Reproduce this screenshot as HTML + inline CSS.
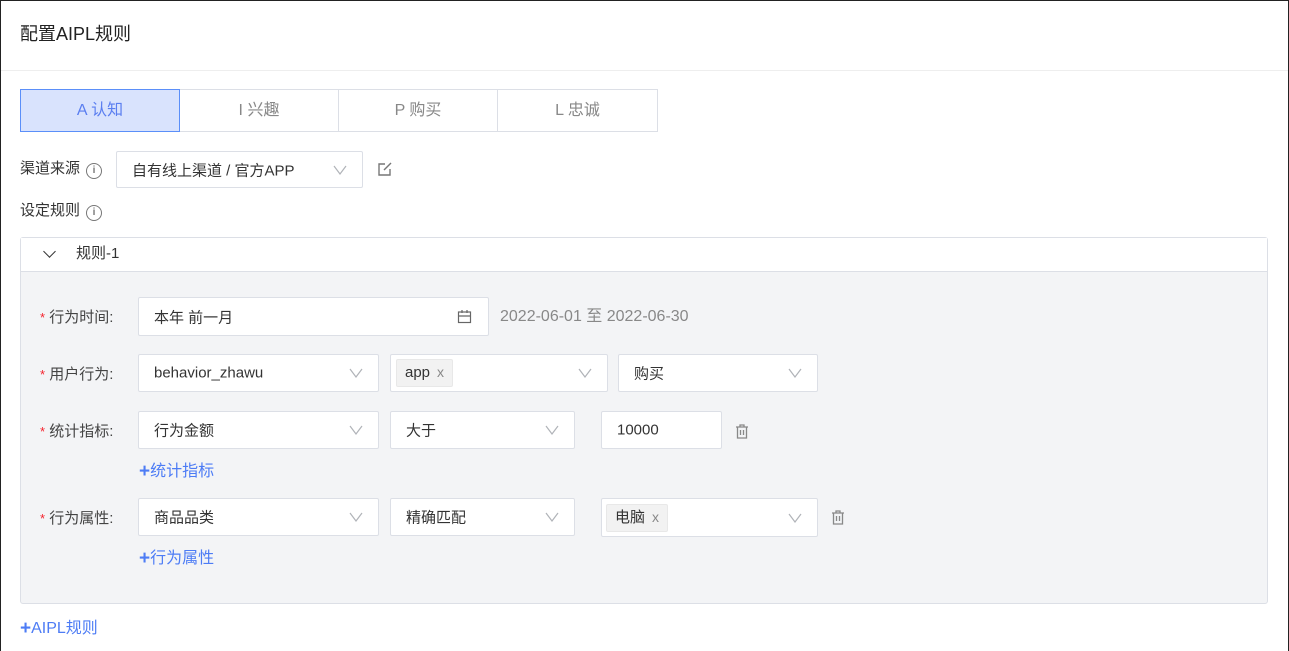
<!DOCTYPE html><html><head><meta charset="utf-8"><style>
*{box-sizing:border-box;margin:0;padding:0}
body{width:1289px;height:651px;overflow:hidden;background:#fff;font-family:"Liberation Sans","Noto Sans CJK SC",sans-serif;font-size:15px;color:#333;position:relative}
.frame{position:absolute;left:0;top:0;width:1289px;height:651px;border:1px solid #222;border-bottom:none}
.a{position:absolute}
.t{position:absolute;line-height:20px;white-space:nowrap}
.box{position:absolute;background:#fff;border:1px solid #dcdfe6;border-radius:2px}
.box span{position:absolute;left:15px;top:50%;transform:translateY(-50%);white-space:nowrap}
.chev{position:absolute;right:14px;top:50%;margin-top:-6px;width:16px;height:12px}
.tab{position:absolute;top:89px;height:43px;border:1px solid #dcdfe6;text-align:center;line-height:41px;color:#888;font-size:16px}
.req{color:#f5222d;font-size:13px}
.lbl{position:absolute;left:40px;white-space:nowrap;color:#444}
.tag{position:absolute;top:50%;transform:translateY(-50%);background:#f2f2f2;border:1px solid #e8e8e8;border-radius:2px;height:27px;line-height:25px;padding:0 8px;white-space:nowrap}
.tag i{font-style:normal;color:#888;font-size:14px;margin-left:7px}
.blue{color:#4d7cf5}
.plus{font-size:19px;font-weight:bold;vertical-align:-1px}
.info{display:inline-block;width:16px;height:16px;border:1.3px solid #777;border-radius:50%;font-size:10px;line-height:14px;text-align:center;color:#777;font-style:normal;vertical-align:0px;margin-left:6px;font-weight:bold}
</style></head><body>
<div class="frame"></div>
<div class="t" style="left:20px;top:24px;font-size:18px;color:#222">配置AIPL规则</div>
<div class="a" style="left:1px;right:1px;top:70px;height:1px;background:#eee"></div>

<div class="tab" style="left:20px;width:160px;background:#d9e3fd;border-color:#5b8ff9;color:#5a7ef0;z-index:2">A 认知</div>
<div class="tab" style="left:179px;width:160px">I 兴趣</div>
<div class="tab" style="left:338px;width:160px">P 购买</div>
<div class="tab" style="left:497px;width:161px">L 忠诚</div>

<svg width="0" height="0" style="position:absolute"><defs><symbol id="cv" viewBox="0 0 16 12"><path d="M2 2l6 8 6-8" fill="none" stroke="#b0b3b8" stroke-width="1.2"/></symbol></defs></svg>

<div class="t" style="left:20px;top:159px">渠道来源<i class="info">i</i></div>
<div class="box" style="left:116px;top:151px;width:247px;height:37px"><span>自有线上渠道 / 官方APP</span><svg class="chev"><use href="#cv"/></svg></div>
<svg class="a" style="left:377px;top:161px" width="16" height="16" viewBox="0 0 16 16" fill="none" stroke="#777" stroke-width="1.4"><path d="M13 8v6H2V3h6"/><path d="M14 2L7 9"/></svg>
<div class="t" style="left:20px;top:201px">设定规则<i class="info">i</i></div>

<div class="a" style="left:20px;top:237px;width:1248px;height:367px;border:1px solid #dcdfe6;border-radius:3px;background:#f3f4f6"></div>
<div class="a" style="left:21px;top:238px;width:1246px;height:34px;background:#fff;border-bottom:1px solid #dcdfe6"></div>
<div class="a" style="left:45px;top:247px;width:9px;height:9px;border-right:1.5px solid #333;border-bottom:1.5px solid #333;transform:rotate(45deg)"></div>
<div class="t" style="left:76px;top:244px">规则-1</div>

<div class="lbl" style="top:306px"><span class="req">*</span> 行为时间:</div>
<div class="box" style="left:138px;top:297px;width:351px;height:39px"><span>本年 前一月</span>
<svg class="a" style="right:16px;top:11px" width="15" height="15" viewBox="0 0 15 15" fill="none" stroke="#666" stroke-width="1.2"><rect x="1.5" y="3" width="12" height="10.5"/><path d="M1.5 7h12M5 1v3M10 1v3"/></svg></div>
<div class="t" style="left:500px;top:307px;color:#888;font-size:16px">2022-06-01 至 2022-06-30</div>

<div class="lbl" style="top:363px"><span class="req">*</span> 用户行为:</div>
<div class="box" style="left:138px;top:354px;width:241px;height:38px"><span>behavior_zhawu</span><svg class="chev"><use href="#cv"/></svg></div>
<div class="box" style="left:390px;top:354px;width:218px;height:38px"><div class="tag" style="left:5px;height:28px">app<i>x</i></div><svg class="chev"><use href="#cv"/></svg></div>
<div class="box" style="left:618px;top:354px;width:200px;height:38px"><span>购买</span><svg class="chev"><use href="#cv"/></svg></div>

<div class="lbl" style="top:420px"><span class="req">*</span> 统计指标:</div>
<div class="box" style="left:138px;top:411px;width:241px;height:38px"><span>行为金额</span><svg class="chev"><use href="#cv"/></svg></div>
<div class="box" style="left:390px;top:411px;width:185px;height:38px"><span>大于</span><svg class="chev"><use href="#cv"/></svg></div>
<div class="box" style="left:601px;top:411px;width:121px;height:38px"><span>10000</span></div>
<svg class="a" style="left:735px;top:424px" width="14" height="15" viewBox="0 0 14 15" fill="none" stroke="#888" stroke-width="1.3"><path d="M1 3h12M5 3V1h4v2M2.5 3v11h9V3M5.5 6v5M8.5 6v5"/></svg>
<div class="t blue" style="left:139px;top:462px;font-size:16px"><span class="plus">+</span>统计指标</div>

<div class="lbl" style="top:507px"><span class="req">*</span> 行为属性:</div>
<div class="box" style="left:138px;top:498px;width:241px;height:38px"><span>商品品类</span><svg class="chev"><use href="#cv"/></svg></div>
<div class="box" style="left:390px;top:498px;width:185px;height:38px"><span>精确匹配</span><svg class="chev"><use href="#cv"/></svg></div>
<div class="box" style="left:601px;top:498px;width:217px;height:39px"><div class="tag" style="left:4px;height:28px">电脑<i>x</i></div><svg class="chev"><use href="#cv"/></svg></div>
<svg class="a" style="left:831px;top:510px" width="14" height="15" viewBox="0 0 14 15" fill="none" stroke="#888" stroke-width="1.3"><path d="M1 3h12M5 3V1h4v2M2.5 3v11h9V3M5.5 6v5M8.5 6v5"/></svg>
<div class="t blue" style="left:139px;top:549px;font-size:16px"><span class="plus">+</span>行为属性</div>

<div class="t blue" style="left:20px;top:619px;font-size:16px"><span class="plus">+</span>AIPL规则</div>
</body></html>
